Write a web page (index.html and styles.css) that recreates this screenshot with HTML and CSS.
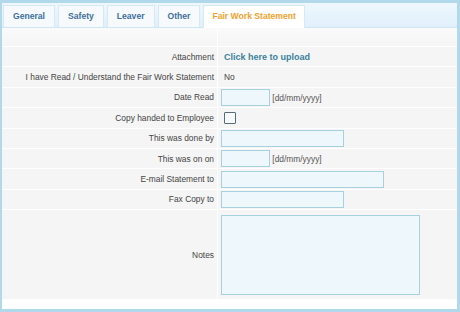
FILE: index.html
```html
<!DOCTYPE html>
<html lang="en">

<head>
    <meta charset="UTF-8">
    <title>Fair Work Statement</title>
    <link rel="stylesheet" href="styles.css">
</head>

<body>
    <div id="window">
        <ul class="tabs">
            <li class="tab">General</li>
            <li class="tab">Safety</li>
            <li class="tab">Leaver</li>
            <li class="tab">Other</li>
            <li class="tab active">Fair Work Statement</li>
        </ul>

        <div class="panel">
            <table class="form">
                <tr class="spacer">
                    <td class="label"></td>
                    <td class="field"></td>
                </tr>
                <tr>
                    <td class="label">Attachment</td>
                    <td class="field"><a class="upload">Click here to upload</a></td>
                </tr>
                <tr>
                    <td class="label">I have Read / Understand the Fair Work Statement</td>
                    <td class="field"><span class="value">No</span></td>
                </tr>
                <tr>
                    <td class="label">Date Read</td>
                    <td class="field"><input class="date"> <span class="hint">[dd/mm/yyyy]</span></td>
                </tr>
                <tr>
                    <td class="label">Copy handed to Employee</td>
                    <td class="field"><span class="check"></span></td>
                </tr>
                <tr>
                    <td class="label">This was done by</td>
                    <td class="field"><input class="medium"></td>
                </tr>
                <tr>
                    <td class="label">This was on on</td>
                    <td class="field"><input class="date"> <span class="hint">[dd/mm/yyyy]</span></td>
                </tr>
                <tr>
                    <td class="label">E-mail Statement to</td>
                    <td class="field"><input class="wide"></td>
                </tr>
                <tr>
                    <td class="label">Fax Copy to</td>
                    <td class="field"><input class="medium"></td>
                </tr>
                <tr class="notes">
                    <td class="label">Notes</td>
                    <td class="field"><textarea></textarea></td>
                </tr>
            </table>
        </div>
    </div>
</body>

</html>
```

FILE: styles.css
```css
body {
    margin: 0;
    font-family: 'Liberation Sans', Arial, sans-serif;
    font-size: 8.4px;
    color: #444;
}

#window {
    width: 460px;
    height: 312px;
    box-sizing: border-box;
    border: 3px solid #b2d9eb;
    border-left-width: 2px;
    background: #fff;
}

.tabs {
    list-style: none;
    margin: 0;
    padding: 2px 0 0 1px;
    display: flex;
    gap: 3px;
    height: 22px;
    background: linear-gradient(#eef7fd, #e0f0fb);
    border-bottom: 1px solid #cfe6f4;
}

.tab {
    padding: 0 9px;
    line-height: 21px;
    font-size: 8.6px;
    font-weight: bold;
    color: #3f6f9c;
    background: #f6fafd;
    border: 1px solid #d6e9f5;
    border-bottom: none;
}

.tab.active {
    color: #f2a22c;
    background: #fff;
    margin-bottom: -1px;
    padding: 0 8px;
}

.panel {
    background: #f5f5f5;
}

.form {
    border-collapse: collapse;
    width: 100%;
}

.form td {
    border-bottom: 1px solid #fff;
    height: 19.4px;
    padding: 0;
    vertical-align: middle;
}

.form .spacer td {
    height: 18px;
    background: linear-gradient(#fafafa, #f5f5f5);
}

.label {
    width: 212px;
    text-align: right;
    padding-right: 3px !important;
    border-right: 1px solid #fff;
}

.field {
    padding-left: 3px !important;
}

.upload,
.value {
    margin-left: 3px;
}

.upload {
    font-weight: bold;
    font-size: 9px;
    color: #3c819c;
}

input,
textarea {
    box-sizing: border-box;
    margin: 0;
    background: #eef7fb;
    border: 1px solid #a8d1e0;
    height: 17px;
    vertical-align: middle;
    font: inherit;
}

input.date {
    width: 49px;
}

input.medium {
    width: 123px;
}

input.wide {
    width: 163px;
}

.hint {
    color: #555;
    vertical-align: middle;
}

.check {
    display: inline-block;
    width: 10px;
    height: 10px;
    margin-left: 3px;
    border: 1px solid #5a6a78;
    border-radius: 1px;
    background: #f7fbfd;
    vertical-align: middle;
}

.form .notes td {
    height: 89px;
    border-bottom: none;
}

textarea {
    display: block;
    width: 199px;
    height: 80px;
    margin: 5px 0 4px;
    resize: none;
}
```
